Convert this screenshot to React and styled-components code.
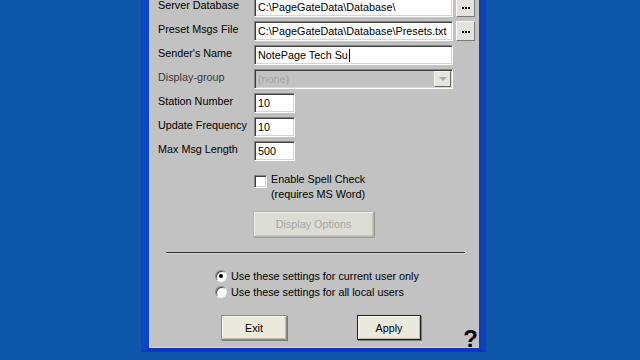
import React from "react";
import styled, { createGlobalStyle } from "styled-components";

const Global = createGlobalStyle`
  html, body { margin: 0; padding: 0; }
  body {
    background: #0e56a8;
    font-family: "Liberation Sans", Arial, sans-serif;
    font-size: 10.8px;
    color: #000;
  }
`;

const Desktop = styled.div`
  width: 640px;
  height: 360px;
  overflow: hidden;
  background: #0e56a8;
  padding-left: 141px;
  box-sizing: border-box;
`;

const Window = styled.div`
  width: 345px;
  box-sizing: border-box;
  border-left: 8px solid #0b44c4;
  border-right: 7px solid #0b40c0;
  border-bottom: 4px solid #0a36c8;
`;

const Panel = styled.div`
  background: #c2c2c2;
  box-shadow: inset 1px 0 #c8d0ee, inset 0 -1px #c8d0ee;
  padding-left: 9px;
  display: flex;
  flex-direction: column;
  height: 348px;
  box-sizing: border-box;
  position: relative;
`;

const Form = styled.div`
  margin-top: -3px;
  display: grid;
  grid-template-columns: 96px auto;
  row-gap: 4px;
`;

const Label = styled.div`
  line-height: 14px;
  padding-top: 1px;
  white-space: nowrap;
  color: ${(p) => (p.$disabled ? "#383838" : "#000")};
`;

const FieldRow = styled.div`
  display: flex;
  align-items: flex-start;
  gap: 3px;
`;

const Field = styled.div`
  width: ${(p) => p.$w}px;
  height: 20px;
  box-sizing: border-box;
  border: 1px solid;
  border-color: #848484 #ffffff #ffffff #848484;
  box-shadow: inset 1px 1px #404040, inset -1px -1px #d8d6d0;
  background: ${(p) => (p.$disabled ? "#c2c2c2" : "#fff")};
  padding: 0 3px;
  line-height: 18px;
  white-space: nowrap;
  overflow: hidden;
  display: flex;
  align-items: center;
  color: ${(p) => (p.$disabled ? "#a4a4a4" : "#000")};
  position: relative;
`;

const Caret = styled.span`
  display: inline-block;
  width: 1px;
  height: 13px;
  background: #000;
  margin-left: 1px;
`;

const ArrowBox = styled.div`
  position: absolute;
  right: 1px;
  top: 1px;
  width: 17px;
  height: 16px;
  box-sizing: border-box;
  background: #e6e4dc;
  border: 1px solid;
  border-color: #f4f4f0 #6a6a6a #6a6a6a #f4f4f0;
  display: flex;
  align-items: center;
  justify-content: center;
`;

const Triangle = styled.div`
  width: 0;
  height: 0;
  border-left: 4px solid transparent;
  border-right: 4px solid transparent;
  border-top: 4px solid #a8a8a8;
`;

const DotsButton = styled.div`
  width: 19px;
  height: 20px;
  box-sizing: border-box;
  background: #e4e2da;
  border: 1px solid;
  border-color: #fafafa #7a7a7a #7a7a7a #fafafa;
  display: flex;
  align-items: center;
  justify-content: center;
  gap: 1px;
`;

const Dot = styled.span`
  width: 2px;
  height: 2px;
  background: #000;
  margin-top: 2px;
`;

const SpellBlock = styled.div`
  margin-top: 11px;
  margin-left: 96px;
  display: flex;
  align-items: flex-start;
  gap: 4px;
`;

const CheckBox = styled.div`
  width: 13px;
  height: 13px;
  margin-top: 3px;
  box-sizing: border-box;
  background: #fff;
  border: 1px solid;
  border-color: #848484 #ffffff #ffffff #848484;
  box-shadow: inset 1px 1px #404040, inset -1px -1px #d8d6d0;
`;

const SpellText = styled.div`
  line-height: 15px;
`;

const Button = styled.div`
  width: ${(p) => p.$w}px;
  height: ${(p) => p.$h}px;
  box-sizing: border-box;
  background: ${(p) => (p.$disabled ? "#dcdbd4" : "#ebe9dc")};
  border: 1px solid ${(p) => (p.$default ? "#202020" : p.$disabled ? "#b4b4ae" : "#8c8c86")};
  box-shadow: ${(p) =>
    p.$disabled
      ? "inset 1px 1px #f0f0ec, inset -1px -1px #c4c4bc, 1px 1px #9a9a96"
      : "inset 1px 1px #fbfbf8, inset -1px -1px #bdbab0, 1px 1px #7a7a76"};
  display: flex;
  align-items: center;
  justify-content: center;
  color: ${(p) => (p.$disabled ? "#a8a8a2" : "#000")};
`;

const DisplayOptions = styled(Button)`
  margin-top: 9px;
  margin-left: 95px;
`;

const Separator = styled.div`
  margin-top: 15px;
  margin-left: 8px;
  width: 299px;
  height: 0;
  border-top: 1px solid #2a2a2a;
  border-bottom: 1px solid #d8d8d8;
`;

const RadioGroup = styled.div`
  margin-top: 14px;
  margin-left: 57px;
  display: flex;
  flex-direction: column;
`;

const RadioRow = styled.div`
  height: 16px;
  display: flex;
  align-items: center;
  gap: 4px;
  white-space: nowrap;
`;

const Radio = styled.div`
  width: 12px;
  height: 12px;
  border-radius: 50%;
  box-sizing: border-box;
  background: #fff;
  border: 1px solid;
  border-color: #888 #f4f4f4 #f4f4f4 #888;
  box-shadow: inset 1px 1px #4a4a4a;
  display: flex;
  align-items: center;
  justify-content: center;
  &::after {
    content: "";
    width: 4px;
    height: 4px;
    border-radius: 50%;
    background: ${(p) => (p.$checked ? "#000" : "transparent")};
  }
`;

const BottomRow = styled.div`
  margin-top: 15px;
  height: 33px;
  display: flex;
  align-items: flex-start;
`;

const ExitButton = styled(Button)`
  margin-left: 63px;
`;

const ApplyButton = styled(Button)`
  margin-left: 70px;
`;

const Help = styled.div`
  margin-left: auto;
  margin-right: 1px;
  align-self: flex-end;
  font-size: 24px;
  font-weight: bold;
  line-height: 24px;
  margin-bottom: -3px;
`;

function Dots() {
  return (
    <DotsButton>
      <Dot />
      <Dot />
      <Dot />
    </DotsButton>
  );
}

export default function App() {
  return (
    <>
      <Global />
      <Desktop>
        <Window>
          <Panel>
            <Form>
              <Label>Server Database</Label>
              <FieldRow>
                <Field $w={199}>C:\PageGateData\Database\</Field>
                <Dots />
              </FieldRow>
              <Label>Preset Msgs File</Label>
              <FieldRow>
                <Field $w={199}>C:\PageGateData\Database\Presets.txt</Field>
                <Dots />
              </FieldRow>
              <Label>Sender's Name</Label>
              <FieldRow>
                <Field $w={199}>
                  NotePage Tech Su
                  <Caret />
                </Field>
              </FieldRow>
              <Label $disabled>Display-group</Label>
              <FieldRow>
                <Field $w={199} $disabled>
                  (none)
                  <ArrowBox>
                    <Triangle />
                  </ArrowBox>
                </Field>
              </FieldRow>
              <Label>Station Number</Label>
              <FieldRow>
                <Field $w={41}>10</Field>
              </FieldRow>
              <Label>Update Frequency</Label>
              <FieldRow>
                <Field $w={41}>10</Field>
              </FieldRow>
              <Label>Max Msg Length</Label>
              <FieldRow>
                <Field $w={41}>500</Field>
              </FieldRow>
            </Form>
            <SpellBlock>
              <CheckBox />
              <SpellText>
                Enable Spell Check
                <br />
                (requires MS Word)
              </SpellText>
            </SpellBlock>
            <DisplayOptions $w={121} $h={26} $disabled>
              Display Options
            </DisplayOptions>
            <Separator />
            <RadioGroup>
              <RadioRow>
                <Radio $checked />
                Use these settings for current user only
              </RadioRow>
              <RadioRow>
                <Radio />
                Use these settings for all local users
              </RadioRow>
            </RadioGroup>
            <BottomRow>
              <ExitButton $w={66} $h={25}>Exit</ExitButton>
              <ApplyButton $w={64} $h={25} $default>Apply</ApplyButton>
              <Help>?</Help>
            </BottomRow>
          </Panel>
        </Window>
      </Desktop>
    </>
  );
}
